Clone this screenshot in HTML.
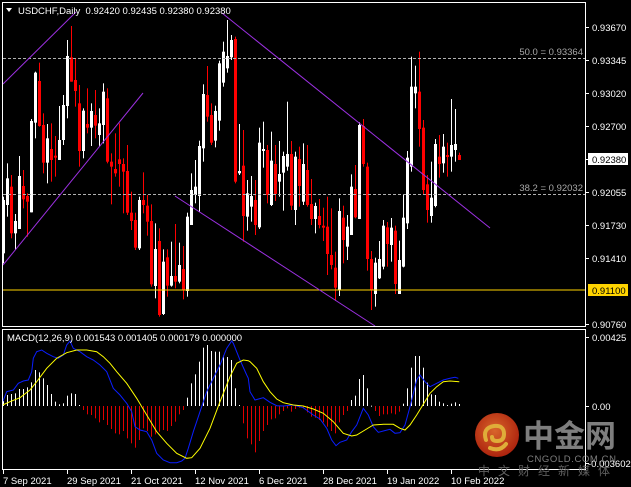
<!DOCTYPE html>
<html><head><meta charset="utf-8"><style>
html,body{margin:0;padding:0;background:#000;width:631px;height:487px;overflow:hidden}
svg{display:block}
text{font-family:"Liberation Sans","Noto Sans CJK SC",sans-serif}
</style></head><body>
<svg id="s" width="631" height="487" viewBox="0 0 631 487" xmlns="http://www.w3.org/2000/svg">
<rect width="631" height="487" fill="#000"/>
<g id="cand"></g>
<g id="macd"></g>
<!-- fib / level lines -->
<line x1="3" y1="58.5" x2="585" y2="58.5" stroke="#b0b0b0" stroke-dasharray="3,2"/>
<line x1="3" y1="194.5" x2="585" y2="194.5" stroke="#b0b0b0" stroke-dasharray="3,2"/>
<line x1="3" y1="290" x2="585" y2="290" stroke="#ffd400"/>
<text x="583" y="55" font-size="9.5" fill="#a8a8a8" text-anchor="end">50.0 = 0.93364</text>
<text x="583" y="191" font-size="9.5" fill="#a8a8a8" text-anchor="end">38.2 = 0.92032</text>
<!-- purple trend lines -->
<g stroke="#9b30e0" stroke-width="1" fill="none">
<line x1="3" y1="84" x2="76" y2="12"/>
<line x1="3" y1="265" x2="143" y2="93"/>
<line x1="222" y1="13" x2="490" y2="228"/>
<line x1="175" y1="196" x2="375" y2="326"/>
</g>
<!-- frames -->
<g stroke="#fff" stroke-width="1" fill="none">
<rect x="2.5" y="2.5" width="583" height="324"/>
<rect x="2.5" y="329.5" width="583" height="140"/>
</g>
<!-- title -->
<polygon points="6,8 12,8 9,12" fill="#fff"/>
<text x="18" y="14" font-size="9.5" fill="#fff">USDCHF,Daily&#160; 0.92420 0.92435 0.92380 0.92380</text>
<text x="7" y="341" font-size="9.5" fill="#fff">MACD(12,26,9) 0.001543 0.001405 0.000179 0.000000</text>
<!-- right axis -->
<g id="axis" font-size="9.5" fill="#fff"></g>
<rect x="588" y="153" width="40" height="12" fill="#fff"/>
<text x="592" y="163" font-size="9.5" fill="#000">0.92380</text>
<rect x="588" y="284" width="40" height="12" fill="#ffd400"/>
<text x="592" y="294" font-size="9.5" fill="#000">0.91100</text>
<!-- watermark -->
<g opacity="0.9">
<defs><radialGradient id="g" cx="45%" cy="40%" r="60%"><stop offset="0" stop-color="#f07030"/><stop offset="1" stop-color="#c02810"/></radialGradient></defs>
<circle cx="497" cy="435" r="22" fill="url(#g)"/>
<path d="M486 440 q-4 -12 8 -14 q10 -1 10 8 q0 7 -7 7 q-5 0 -5 -4 M490 448 q10 4 16 -4" stroke="#f8c040" stroke-width="4" fill="none" stroke-linecap="round"/>
<text x="523" y="447" font-size="31" font-weight="bold" fill="#8c8c8c">中金网</text>
<text x="527" y="462" font-size="9.5" fill="#8c8c8c" letter-spacing="0.6">CNGOLD.COM.CN</text>
<text x="478" y="475" font-size="12" fill="#6a6a6a" letter-spacing="8">中文财经新媒体</text>
</g>
<!-- dates -->
<g id="dates" font-size="9.5" fill="#fff"></g>
</svg>
<script>
var NS="http://www.w3.org/2000/svg";
function el(p,t,a,txt){var e=document.createElementNS(NS,t);for(var k in a)e.setAttribute(k,a[k]);if(txt)e.textContent=txt;p.appendChild(e);return e;}
var C="W 540 700 530 730|W 475 555 430 590|R 500 640 465 655|W 603 640 582 690|W 468 627 408 627|R 498 538 450 565|R 528 545 520 650|W 303 577 297 577|W 158 308 155 355|R 183 318 128 320|R 315 428 280 460|W 355 428 312 490|R 387 420 310 485|R 407 413 348 470|W 360 420 258 420|W 255 360 225 375|W 108 258 60 295|R 112 185 18 185|R 180 213 115 260|R 250 393 195 440|W 272 393 265 415|R 312 323 205 340|W 273 323 250 378|R 285 317 210 355|W 310 345 265 380|W 215 315 190 370|R 235 425 205 430|R 425 440 400 553|R 447 460 340 470|R 418 432 310 500|R 432 455 415 580|R 453 578 375 585|R 578 603 515 630|R 600 683 578 690|W 540 685 530 690|R 540 555 457 580|R 557 605 525 647|R 603 793 553 800|W 687 798 610 835|R 663 885 625 890|W 725 882 688 885|R 712 797 688 830|W 768 797 665 800|R 768 785 612 805|W 735 785 668 790|R 747 810 678 838|W 590 813 578 830|W 510 615 460 615|W 500 525 420 550|W 378 528 362 575|W 222 385 193 425|R 225 290 138 305|R 285 368 250 375|W 273 362 257 382|W 130 302 122 332|W 95 188 65 200|W 108 145 0 158|W 60 112 45 120|R 57 485 50 490|W 453 460 312 465|R 437 588 330 665|W 520 590 480 632|W 528 560 468 605|R 540 615 480 645|W 368 622 323 627|W 387 393 305 443|R 390 525 375 550|W 422 555 335 558|R 432 522 375 543|W 462 485 363 530|W 408 458 395 572|W 402 440 245 452|R 402 557 363 570|W 410 570 395 615|R 417 498 380 560|W 432 545 370 555|R 450 555 375 560|R 552 597 477 615|W 558 597 548 640|R 588 615 537 625|R 617 623 563 663|R 620 702 530 765|R 705 735 565 748|R 743 803 695 843|W 573 810 535 828|R 593 660 557 730|W 620 680 585 720|W 500 645 463 645|R 507 592 435 595|W 315 597 307 597|R 318 432 297 440|R 440 717 428 752|R 717 810 693 870|W 728 822 713 860|W 717 775 663 777|W 617 740 600 748|R 622 672 606 740|W 623 675 594 725|R 632 792 617 822|W 720 822 662 822|W 593 740 525 742|W 413 610 393 627|W 200 440 110 455|W 200 220 137 265|R 215 327 95 380|R 323 510 300 525|R 493 570 465 608|W 533 588 425 608|W 372 558 357 562|R 410 432 345 473|W 380 430 342 458|R 405 411 368 470|W 375 410 237 455|W 372 390 267 425|R 405 420 398 420".split("|");
var cg=document.getElementById("cand");
C.forEach(function(s,i){var p=s.split(" ");var col=p[0]=="W"?"#fff":"#ff0000";
 var y=function(v){return 20+(+v)/3;};
 var bt=y(p[1]),bb=y(p[2]),wt=y(p[3]),wb=y(p[4]);
 wt=Math.max(wt,3);
 el(cg,"rect",{x:3+4*i,y:wt,width:1,height:Math.max(1,wb-wt),fill:col});
 el(cg,"rect",{x:2+4*i,y:bt,width:3,height:Math.max(1,bb-bt),fill:col});
});
var H=[228,210,207,205,192,192,187,172,135,142,160,180,207,230,238,235,212,205,207,240,255,268,270,280,292,285,300,312,325,328,318,340,355,368,345,310,318,335,328,320,315,318,303,290,268,255,218,175,148,110,68,60,78,80,80,92,96,105,190,240,295,340,358,382,348,318,300,283,280,268,258,250,260,252,248,250,262,275,278,285,292,305,318,325,292,270,258,225,212,162,150,190,242,258,273,268,268,265,268,260,236,190,128,93,93,128,173,208,210,230,235,240,236,232,237];
var mg=document.getElementById("macd");
H.forEach(function(v,i){var y=325+v/3,z=406;var col=v<243?"#fff":"#e00000";
 el(mg,"rect",{x:3+4*i,y:Math.min(y,z),width:1,height:Math.max(1,Math.abs(y-z)),fill:col});});
function pl(a,b,col){var pts=a.map(function(q){return (q[0]/3).toFixed(1)+","+(325+q[1]/3).toFixed(1)}).concat(b.map(function(q){return (250+q[0]/3).toFixed(1)+","+(325+q[1]/3).toFixed(1)}));
 el(mg,"polyline",{points:pts.join(" "),fill:"none",stroke:col,"stroke-width":1});}
pl([[8,230],[20,200],[40,195],[55,175],[70,168],[85,165],[95,140],[100,100],[110,80],[125,75],[140,85],[160,95],[175,100],[190,90],[200,60],[210,48],[220,70],[240,80],[260,95],[280,105],[300,120],[320,140],[340,190],[360,210],[380,235],[395,260],[405,305],[420,315],[440,320],[455,345],[470,385],[490,405],[510,413],[530,413],[545,408],[555,400],[565,370],[580,320],[600,260],[620,200],[640,160],[660,120],[680,70],[695,48],[700,55],[720,105],[740,150],[745,160]],
 [[0,200],[15,225],[40,218],[60,232],[80,242],[100,243],[130,240],[160,248],[190,270],[210,282],[230,310],[245,345],[258,362],[270,352],[290,345],[305,320],[320,300],[340,250],[355,270],[370,305],[385,322],[400,318],[420,313],[435,325],[450,323],[465,300],[480,245],[500,165],[510,150],[525,170],[540,185],[560,175],[580,165],[600,160],[615,157],[625,160]],"#0a1eff");
pl([[8,240],[30,230],[60,218],[90,195],[110,170],[140,130],[170,100],[200,83],[230,75],[260,75],[290,80],[310,95],[330,115],[350,140],[380,175],[410,220],[440,270],[470,320],[500,355],[530,385],[560,400],[575,398],[600,370],[630,310],[660,230],[690,155],[710,115],[730,105],[745,107]],
 [[0,110],[20,130],[40,170],[60,200],[80,222],[100,233],[130,240],[160,243],[190,252],[220,265],[250,290],[280,325],[305,333],[320,330],[345,315],[370,300],[400,298],[430,298],[450,310],[465,315],[480,300],[500,270],[520,238],[540,205],[560,185],[580,170],[600,168],[628,170]],"#ffff00");
var ax=document.getElementById("axis");
[["0.93670",27],["0.93345",60],["0.93020",93],["0.92700",126],["0.92055",192],["0.91730",225],["0.91410",258],["0.90760",324],["0.00425",337],["0.00",406],["-0.003602",463]].forEach(function(a){
 el(ax,"rect",{x:586,y:a[1],width:3,height:1,fill:"#fff"});
 el(ax,"text",{x:a[0][0]=="-"?588:592,y:a[1]+4},a[0]);});
el(ax,"rect",{x:586,y:159,width:3,height:1,fill:"#fff"});
var dg=document.getElementById("dates");
[["7 Sep 2021",3],["29 Sep 2021",67],["21 Oct 2021",131],["12 Nov 2021",195],["6 Dec 2021",259],["28 Dec 2021",323],["19 Jan 2022",387],["10 Feb 2022",451]].forEach(function(d){
 el(dg,"rect",{x:d[1],y:470,width:1,height:4,fill:"#fff"});
 el(dg,"text",{x:d[1],y:484},d[0]);});
</script>
</body></html>
